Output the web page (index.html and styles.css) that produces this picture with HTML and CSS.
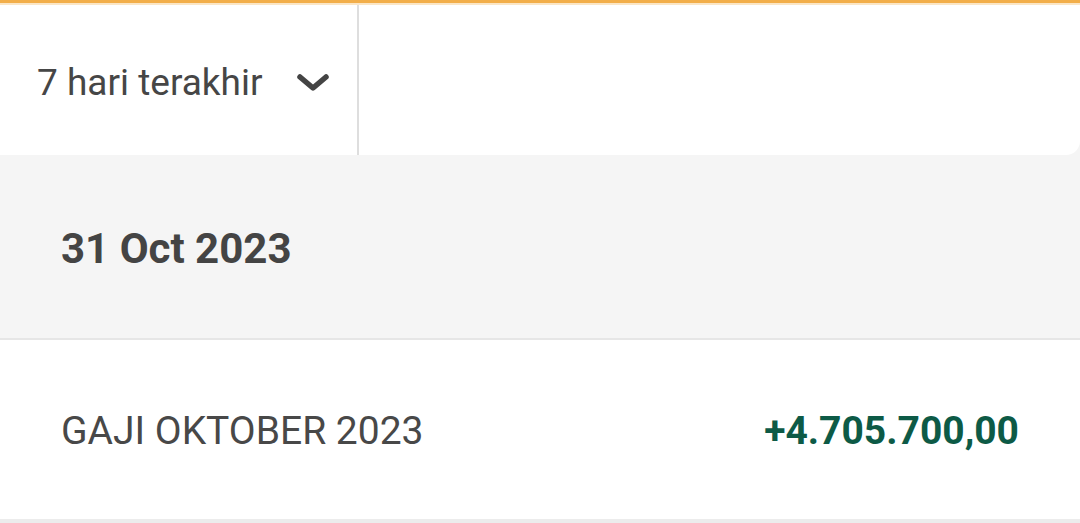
FILE: index.html
```html
<!DOCTYPE html>
<html>
<head>
<meta charset="utf-8">
<link rel="stylesheet" href="styles.css">
</head>
<body>
<div class="topbar"></div>
<div class="filters">
  <div class="dropdown">
    <span class="dropdown-label">7 hari terakhir</span>
    <svg class="chevron" width="34" height="22" viewBox="0 0 34 22"><path d="M4 5 L17 16 L30 5" fill="none" stroke="#444" stroke-width="5.5" stroke-linecap="round" stroke-linejoin="round"/></svg>
  </div>
  <div class="divider"></div>
  <div class="search"></div>
</div>
<div class="date-header">31 Oct 2023</div>
<div class="tx-row">
  <span class="tx-name">GAJI OKTOBER 2023</span>
  <span class="tx-amount">+4.705.700,00</span>
</div>
</body>
</html>
```
FILE: styles.css
```css
html, body {
  margin: 0;
  padding: 0;
}
body {
  background: #f5f5f5;
  font-family: Roboto, "Noto Sans", sans-serif;
  color: #464646;
  width: 1080px;
  height: 523px;
  overflow: hidden;
}
.topbar {
  height: 3px;
  background: #f2ae4a;
  border-bottom: 2px solid #fbe6c6;
}
.filters {
  display: flex;
  height: 150px;
}
.dropdown {
  width: 357px;
  background: #fff;
  display: flex;
  align-items: center;
  box-sizing: border-box;
  padding-left: 37px;
  padding-top: 4px;
}
.dropdown-label {
  font-size: 37px;
  width: 259px;
}
.chevron {
  display: block;
  margin-top: 2px;
}
.divider {
  width: 2px;
  background: #dedede;
}
.search {
  flex: 1;
  background: #fff;
  border-bottom-right-radius: 14px;
}
.date-header {
  height: 185px;
  box-sizing: border-box;
  padding-left: 61px;
  display: flex;
  align-items: center;
  font-size: 42px;
  font-weight: 700;
  color: #444;
  border-bottom: 2px solid #e6e6e6;
  padding-top: 4px;
}
.tx-row {
  height: 177px;
  background: #fff;
  display: flex;
  align-items: center;
  justify-content: space-between;
  padding: 0 61px;
  border-bottom: 4px solid #ececec;
  padding-top: 2px;
}
.tx-name {
  font-size: 39px;
  color: #484848;
}
.tx-amount {
  font-size: 39px;
  font-weight: 700;
  color: #0d5a46;
}
```
